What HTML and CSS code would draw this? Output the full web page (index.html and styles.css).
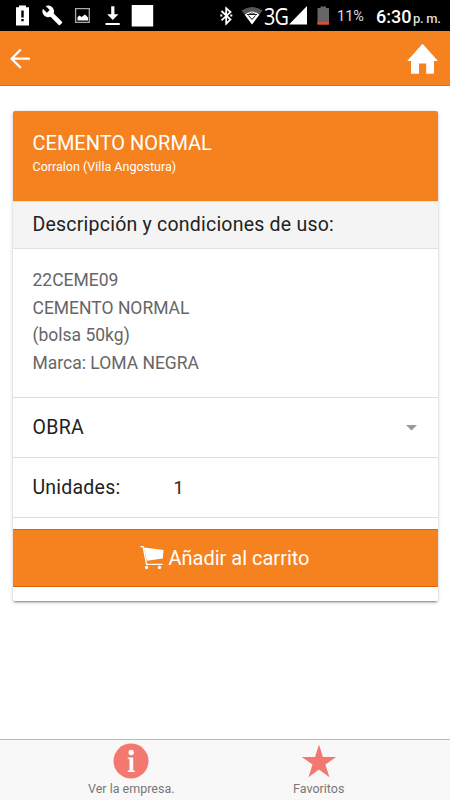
FILE: index.html
```
<!DOCTYPE html>
<html lang="es">
<head>
<meta charset="utf-8">
<title>Cemento normal</title>
<link rel="stylesheet" href="styles.css">
</head>
<body>
<div class="app">
  <div class="status">
    <svg class="status-left" width="160" height="31" viewBox="0 0 160 31">
      <path fill="#fff" d="M16 7.300h3V5.500h7v1.800h3V25.500H16z"/>
      <path fill="#000" d="M21.300 10.500h2.400v7h-2.400zM21.300 19h2.400v2.300h-2.400z"/>
      <path fill="#fff" d="M62 21.800 53.700 13.600c.8-2.200.3-4.700-1.400-6.400-1.800-1.700-4.500-2.100-6.600-1.100l3.900 3.900-2.700 2.700-4-3.900c-1 2.100-.6 4.800 1.200 6.600 1.700 1.700 4.200 2.200 6.400 1.400l8.200 8.200c.4.400 1 .4 1.300 0l2-2c.4-.3.400-.9 0-1.200z"/>
      <path fill="none" stroke="#aaa" stroke-width="1.300" d="M75.600 8.700h13.700v13.700H75.600z"/>
      <path fill="#fff" d="M77.500 20.500v-3.300l2-1.700 2 1.500 3.500-2.500 3 3v3z"/>
      <path fill="#fff" d="M111.200 6.200h3.200v8h4l-5.600 5.900-5.600-5.900h4zM105.500 23h14.200v2h-14.200zM131.700 5H153.200v21.500H131.700z"/>
    </svg>
    <div class="status-right">
      <svg class="signals" width="46" height="31" viewBox="218 0 46 31">
        <path fill="none" stroke="#fff" stroke-width="1.800" d="m221.500 11 9 8.500-4.300 4.100V8.200l4.300 3.900-9 8.200"/>
        <path fill="#fff" d="M220.300 14.600h2v2h-2zM230.300 14.600h2v2h-2z"/>
        <path fill="#555" d="M241.500 10.500Q252 3.500 262.500 10.500L252 24.500z"/>
        <path fill="#fff" d="M244.800 14.700Q252 8.500 259.300 14.700L252 24.500z"/>
        <path fill="none" stroke="#000" stroke-width=".9" d="m248.500 15.500 3.500 4 3.500-4M247 14.500h10M249 12.500l1.500 1.500 1.500-1.500 1.500 1.500 1.500-1.500"/>
      </svg>
      <span class="network">3G</span>
      <svg class="battery" width="46" height="31" viewBox="288 0 46 31">
        <path fill="#fff" d="M307 6v18.500H289z"/>
        <path fill="#666" d="M317.500 8h3V6.500h5.500V8h3v16.500h-11.500z"/>
        <path fill="#e04e27" d="M317.500 22h11.500v2.500h-11.500z"/>
      </svg>
      <span class="percent">11%</span>
      <span class="clock">6:30</span>
      <span class="meridiem">p. m.</span>
    </div>
  </div>
  <header class="topbar">
    <svg width="24" height="24" viewBox="8 46 24 24"><path fill="none" stroke="#fff" stroke-width="2.200" d="M30 58.700H12M20.800 49.500l-9.200 9.200 9.200 9.200"/></svg>
    <svg width="32" height="32" viewBox="407 43 32 32"><path fill="#fff" d="M422.500 43.700 438 61h-4v12.800h-7.800V63.500H419v10.300h-8V61h-3.800z"/></svg>
  </header>
  <main class="content">
    <section class="card">
      <div class="product">
        <h1 class="product-name">CEMENTO NORMAL</h1>
        <p class="product-seller">Corralon (Villa Angostura)</p>
      </div>
      <h2 class="subtitle"><span>Descripción y condiciones de uso:</span></h2>
      <div class="description">
        <div class="code">22CEME09</div>
        <div class="name">CEMENTO NORMAL</div>
        <div class="size">(bolsa 50kg)</div>
        <div class="brand">Marca: LOMA NEGRA</div>
      </div>
      <div class="row select"><span class="obra">OBRA</span><i class="caret"></i></div>
      <div class="row"><span class="units">Unidades:</span><span class="amount">1</span></div>
      <div class="action">
        <button class="add" type="button">
          <svg width="24" height="24" viewBox="140 546 24 24"><path fill="#fff" d="M143.800 547.500 163.500 550l-.7 8.500-16 2.200z"/><path fill="none" stroke="#fff" stroke-width="1.300" d="M140.300 546.700h2.800l3.500 17.600h16"/><circle cx="146.500" cy="567.400" r="1.600" fill="#fff"/><circle cx="159.500" cy="567.400" r="1.600" fill="#fff"/></svg>
          <span>Añadir al carrito</span>
        </button>
      </div>
    </section>
  </main>
  <nav class="tabs">
    <a class="tab">
      <svg width="36" height="36" viewBox="0 0 36 36"><circle cx="18" cy="18" r="17.500" fill="#f37970"/><circle cx="18.200" cy="9.500" r="2.700" fill="#fff"/><path fill="#fff" d="M14.700 14.500h5.500v12.700l1.500.5v1.200h-7v-1.200l1.800-.5V16.200l-1.800-.5z"/></svg>
      <span class="tab-company">Ver la empresa.</span>
    </a>
    <a class="tab">
      <svg width="36" height="36" viewBox="0 0 36 36"><path fill="#f37970" d="m18 1.500 3.900 12.500h13.200l-10.700 7.600 4 12.600L18 26.500 7.500 34.200l4-12.600L.8 14H14z"/></svg>
      <span class="tab-favorites">Favoritos</span>
    </a>
  </nav>
</div>
</body>
</html>
```
FILE: styles.css
```
* { box-sizing: border-box; }
body { margin: 0; background: #fff; font-family: Roboto, "Liberation Sans", sans-serif; }
h1, h2, p { margin: 0; font-weight: 400; }
svg { display: block; flex: none; }
.app { display: flex; flex-direction: column; height: 800px; overflow: hidden; }
.status { display: flex; height: 31px; flex: none; background: #000; color: #ddd; }
.status-right { display: flex; margin-left: 58px; white-space: nowrap; line-height: 31px; }
.status-right span { flex: none; }
.network { width: 24px; color: #fff; font: 23px/32px "Open Sans", sans-serif; letter-spacing: -1px; transform: scaleX(.86); transform-origin: left; }
.battery { margin-right: 3px; }
.percent { width: 39px; font-size: 14.500px; line-height: 33px; }
.clock { width: 37px; color: #fff; font-size: 18px; font-weight: 500; line-height: 33px; }
.meridiem { font-size: 13px; font-weight: 500; line-height: 37px; letter-spacing: -.3px; }
.topbar { display: flex; flex: none; height: 55px; padding: 12px 11px 0 8px; justify-content: space-between; background: #f6821f; border-bottom: 1px solid #ee6a0e; }
.topbar svg:first-child { margin-top: 3px; }
.content { flex: 1; padding: 25px 12.500px 0; }
.card { height: 490px; overflow: hidden; border-radius: 2px; background: #fff; box-shadow: 0 2px 2px rgba(0,0,0,.14), 0 3px 1px -2px rgba(0,0,0,.2), 0 1px 4px rgba(0,0,0,.16); }
.product { height: 90px; padding: 20px 20px 0; background: #f6821f; color: #fff; }
.product-name { font-size: 20px; line-height: 24px; }
.product-seller { margin-top: 3px; font-size: 12.500px; line-height: 17px; }
.subtitle { height: 47.500px; padding-left: 20px; border: solid #e1e1e1; border-width: 1px 0; background: #f4f4f4; color: #222; font-size: 19.500px; line-height: 46px; letter-spacing: .22px; }
.description { height: 149px; padding: 18.500px 20px; border-bottom: 1px solid #dedede; color: #666; font-size: 17.500px; line-height: 27.500px; }
.row { display: flex; height: 60px; padding: 1px 20px 0; align-items: center; border-bottom: 1px solid #dedede; color: #222; font-size: 19.500px; }
.select { justify-content: space-between; }
.obra { letter-spacing: .3px; }
.caret { width: 12px; height: 6px; background: #999; clip-path: polygon(0 0, 100% 0, 50% 100%); }
.units { width: 141px; letter-spacing: .22px; }
.amount { font-size: 18px; }
.action { padding-top: 11.500px; }
.add { display: flex; width: 100%; height: 58px; padding: 0; justify-content: center; align-items: center; gap: 4px; border: solid #df6412; border-width: 1px 0; background: #f6821f; color: #fff; font: 20px Roboto, sans-serif; }
.tabs { display: flex; height: 61px; flex: none; padding: 3px 37.500px 0; border-top: 1px solid #b8b8b8; background: #f8f8f8; color: #777; }
.tab { display: flex; flex: 1; flex-direction: column; align-items: center; font-size: 12.500px; line-height: 16px; }
.tab span { margin-top: 1.500px; }
```
